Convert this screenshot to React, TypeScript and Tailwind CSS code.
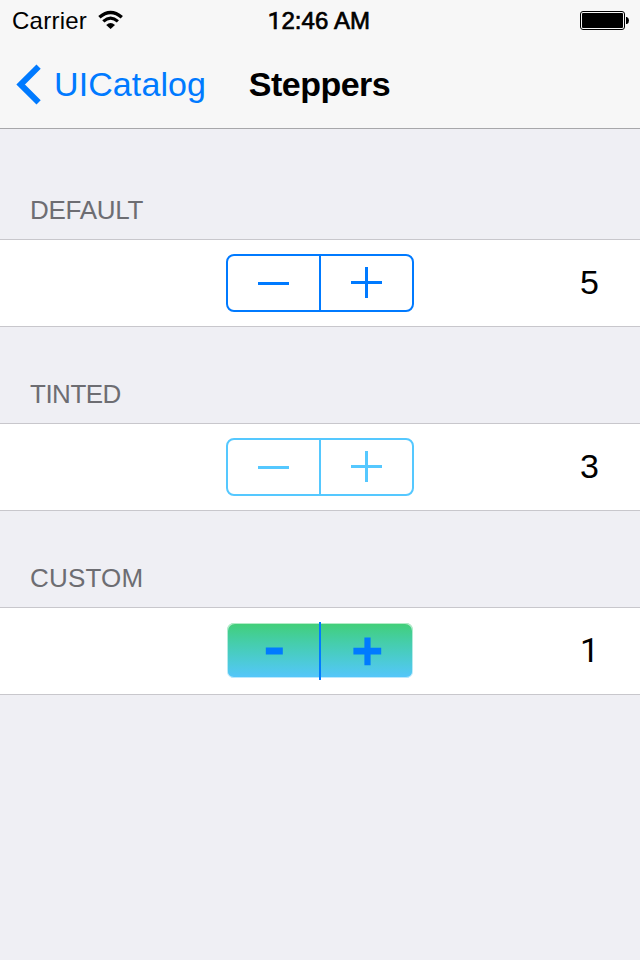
import React from "react";

type Variant = "default" | "tinted" | "custom";

function StatusBar() {
  return (
    <div className="grid h-10 grid-cols-3 pl-3 pr-[11px] text-[24px] leading-[41px]">
      <div className="flex items-start">
        <span className="tracking-[0.25px]">Carrier</span>
        <svg className="ml-[11px] mt-[10px]" width="26" height="20" viewBox="0 0 26 20" fill="none" stroke="#000">
          <path d="M1.4 7.2Q12.6 -2.4 23.8 7.2" strokeWidth="3.4" />
          <path d="M5.3 11.4Q12.6 5 19.9 11.4" strokeWidth="3.2" />
          <path d="M8.2 15Q12.6 11.2 17 15L12.6 19Z" fill="#000" stroke="none" />
        </svg>
      </div>
      <div className="-ml-[3px] whitespace-nowrap text-center tracking-[0.1px] [-webkit-text-stroke:0.7px_#000]">
        <span className="font-['Roboto',sans-serif]">1</span>2:46 AM
      </div>
      <div className="flex items-start justify-end">
        <svg className="mt-[11px]" width="49" height="19" viewBox="0 0 49 19">
          <rect x="0.5" y="0.5" width="44" height="18" rx="2.5" fill="none" stroke="#000" />
          <rect x="2" y="2" width="41" height="15" rx="1" />
          <path d="M46 6H47Q49 7 49 9.5Q49 12 47 13H46Z" />
        </svg>
      </div>
    </div>
  );
}

function NavBar() {
  return (
    <div className="grid h-[88px] grid-cols-[232px_176px_232px] text-[34px] leading-[88px]">
      <div className="flex pl-4 text-[#007aff]">
        <svg className="mt-[24px]" width="26" height="42" viewBox="0 0 26 42" fill="none" stroke="currentColor" strokeWidth="6">
          <path d="M22.6 2.6L4.6 20.5L22.6 38.4" />
        </svg>
        <span className="ml-[12px] tracking-[0.1px]">UICatalog</span>
      </div>
      <h1 className="-ml-px whitespace-nowrap text-center font-bold tracking-[-0.5px]">Steppers</h1>
    </div>
  );
}

function Stepper({ variant }: { variant: Variant }) {
  if (variant === "custom") {
    return (
      <div className="grid h-[58px] w-[188px] grid-cols-[93px_2px_93px] text-[#007aff]">
        <button className="mb-[2px] ml-px mt-px flex rounded-l-[7px] bg-linear-to-b from-[#42cf76] to-[#55c6fc] shadow-[inset_1px_1px_0_#ffffff99,inset_0_-1px_0_#ffffff99]">
          <svg width="92" height="55" viewBox="0 0 92 55" fill="currentColor">
            <rect x="38.8" y="24.5" width="17" height="7" />
          </svg>
        </button>
        <span className="bg-[#007aff]" />
        <button className="mb-[2px] mr-px mt-px flex rounded-r-[7px] bg-linear-to-b from-[#42cf76] to-[#55c6fc] shadow-[inset_-1px_1px_0_#ffffff99,inset_0_-1px_0_#ffffff99]">
          <svg width="92" height="55" viewBox="0 0 92 55" fill="currentColor">
            <path d="M43.4 14.4H49.6V24.8H60.2V31.4H49.6V42.3H43.4V31.4H32.4V24.8H43.4Z" />
          </svg>
        </button>
      </div>
    );
  }
  return (
    <div
      className={`grid h-[58px] w-[188px] grid-cols-[91px_2px_91px] rounded-[8px] border-2 border-current ${
        variant === "tinted" ? "text-[#55c8ff]" : "text-[#007aff]"
      }`}
    >
      <button>
        <svg width="91" height="54" viewBox="0 0 91 54" fill="currentColor">
          <rect x="30" y="26" width="31" height="3" />
        </svg>
      </button>
      <span className="bg-current" />
      <button>
        <svg width="91" height="54" viewBox="0 0 91 54" fill="currentColor">
          <path d="M44 11H47V25H61V28H47V42H44V28H30V25H44Z" />
        </svg>
      </button>
    </div>
  );
}

const sections: { title: string; tracking: string; value: number; font: string; variant: Variant }[] = [
  { title: "DEFAULT", tracking: "tracking-[-0.3px]", value: 5, font: "", variant: "default" },
  { title: "TINTED", tracking: "tracking-[-0.5px]", value: 3, font: "", variant: "tinted" },
  { title: "CUSTOM", tracking: "tracking-[0.2px]", value: 1, font: "font-['Roboto',sans-serif]", variant: "custom" },
];

export default function App() {
  return (
    <div className="h-[960px] w-[640px] overflow-hidden bg-[#efeff4] font-['Liberation_Sans',Arial,sans-serif] text-black">
      <header className="h-[129px] border-b border-[#a7a7aa] bg-[#f7f7f7]">
        <StatusBar />
        <NavBar />
      </header>
      <main className="pt-[14px]">
        {sections.map((s) => (
          <section key={s.title}>
            <h2 className={`flex h-24 items-end pb-[13px] pl-[30px] text-[26px] leading-[32px] text-[#6d6d72] ${s.tracking}`}>
              {s.title}
            </h2>
            <div className="grid h-[88px] grid-cols-[226px_188px_226px] items-center border-y border-[#c8c7cc] bg-white">
              <span />
              <Stepper variant={s.variant} />
              <span className={`pb-[2px] pr-[41px] text-right text-[34px] leading-[40px] ${s.font}`}>{s.value}</span>
            </div>
          </section>
        ))}
      </main>
    </div>
  );
}
